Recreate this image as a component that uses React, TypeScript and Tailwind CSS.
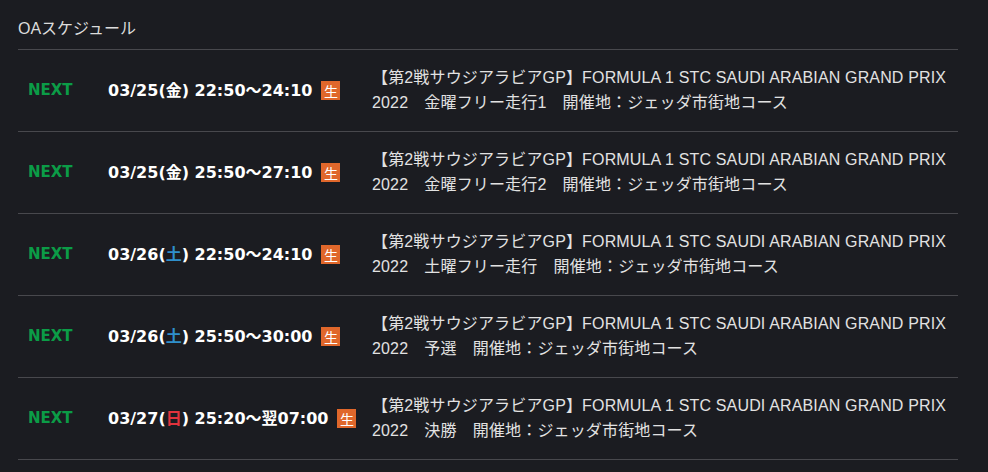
import React from 'react';

type Day = 'weekday' | 'sat' | 'sun';

interface Slot {
  date: string;
  dow: string;
  day: Day;
  time: string;
  session: string;
}

const slots: Slot[] = [
  { date: '03/25', dow: '金', day: 'weekday', time: '22:50〜24:10', session: '金曜フリー走行1' },
  { date: '03/25', dow: '金', day: 'weekday', time: '25:50〜27:10', session: '金曜フリー走行2' },
  { date: '03/26', dow: '土', day: 'sat', time: '22:50〜24:10', session: '土曜フリー走行' },
  { date: '03/26', dow: '土', day: 'sat', time: '25:50〜30:00', session: '予選' },
  { date: '03/27', dow: '日', day: 'sun', time: '25:20〜翌07:00', session: '決勝' },
];

const dowColor = (d: Day) => {
  if (d === 'sat') return 'text-[#2f8fcb]';
  if (d === 'sun') return 'text-[#e2333d]';
  return 'text-white';
};

const boldFont = { fontFamily: '"DejaVu Sans", "Noto Sans CJK JP", sans-serif' };

const ScheduleRow: React.FC<{ slot: Slot }> = ({ slot }) => (
  <div className="flex items-center h-[82px] border-b border-[#48484d]">
    <div className="w-[90px] pl-[10px] text-[15px] font-bold text-[#0b9c47]" style={boldFont}>
      NEXT
    </div>
    <div className="w-[264px] flex items-center text-[16px] font-bold text-white" style={boldFont}>
      <span>
        {slot.date}(<span className={dowColor(slot.day)}>{slot.dow}</span>) {slot.time}
      </span>
      {/* live badge */}
      <span
        className="ml-[9px] w-[19px] h-[19px] flex items-center justify-center bg-[#e0672b] text-white text-[14px] leading-none font-normal"
        style={{ fontFamily: '"Noto Sans CJK JP", sans-serif' }}
      >
        生
      </span>
    </div>
    <div className="flex-1 pb-[2px] text-[16px] leading-[25px] tracking-[0.15px] text-[#e2e2e2]">
      【第2戦サウジアラビアGP】FORMULA 1 STC SAUDI ARABIAN GRAND PRIX 2022　{slot.session}　開催地：ジェッダ市街地コース
    </div>
  </div>
);

export default function App() {
  return (
    <div
      className="w-[988px] h-[472px] bg-[#1b1c21] overflow-hidden"
      style={{ fontFamily: '"Liberation Sans", "Noto Sans CJK JP", sans-serif' }}
    >
      <div className="ml-[18px] w-[940px]">
        <div className="pt-[18px] pb-[10px] text-[16px] leading-[21px] text-[#dcdcdc] border-b border-[#48484d]">
          OAスケジュール
        </div>
        {slots.map((s, i) => (
          <ScheduleRow key={i} slot={s} />
        ))}
      </div>
    </div>
  );
}
